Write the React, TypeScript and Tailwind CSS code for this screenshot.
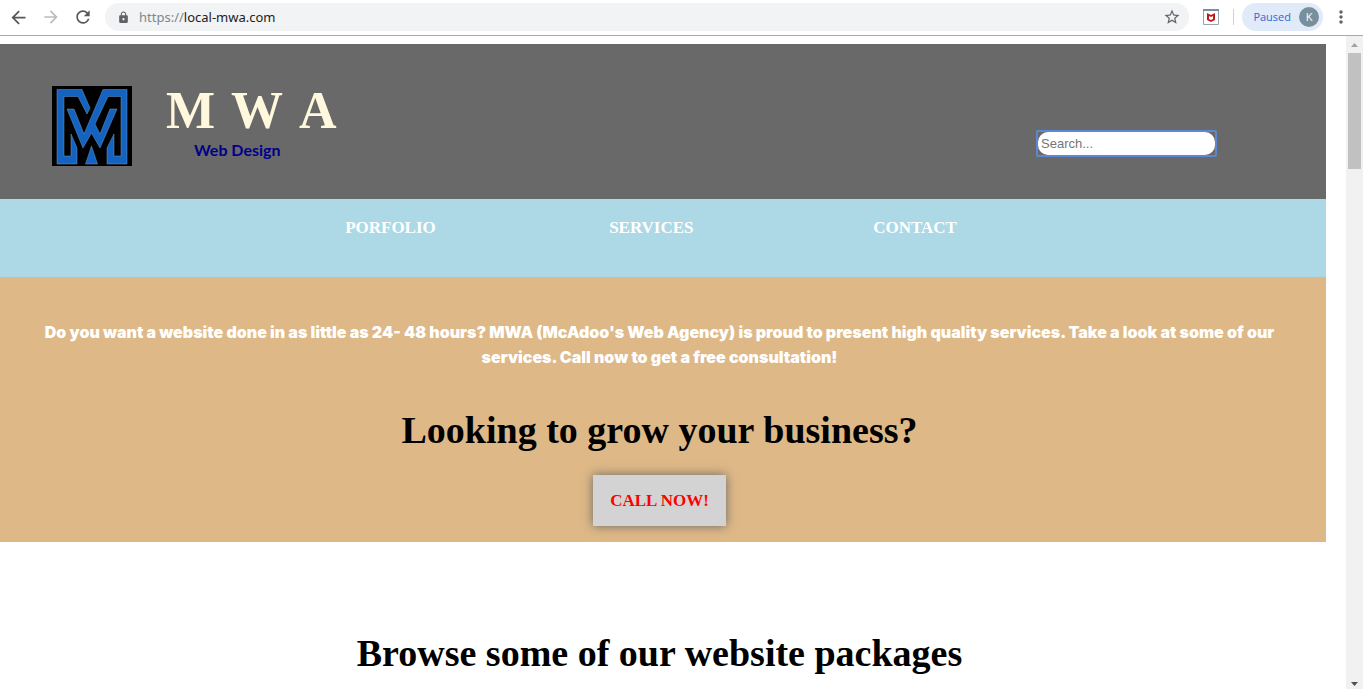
import React from "react";
import { MdArrowBack, MdArrowForward, MdRefresh, MdLock, MdStarBorder, MdMoreVert } from "react-icons/md";

function BrowserBar() {
  return (
    <div className="flex h-9 items-center border-b border-[#a9a9a9] bg-white pb-px text-[#5f6368]">
      <button aria-label="Back" className="ml-2 text-[#55585d]"><MdArrowBack size={21} /></button>
      <button aria-label="Forward" className="ml-3 text-[#babcbe]"><MdArrowForward size={20} /></button>
      <button aria-label="Reload" className="ml-3 text-[#55585d]"><MdRefresh size={20} /></button>
      <div className="ml-3 flex h-7 flex-1 items-center rounded-full bg-[#f1f3f4] pr-2 pl-3">
        <MdLock size={13} />
        <span className="ml-[9px] flex-1 font-['Noto_Sans',sans-serif] text-[13px] leading-5 text-[#202124]">
          <span className="text-[#80868b]">https://</span>local-mwa.com
        </span>
        <button aria-label="Bookmark this page"><MdStarBorder size={18} /></button>
      </div>
      <button aria-label="McAfee WebAdvisor" className="ml-[14px]">
        <svg width="16" height="16" viewBox="0 0 16 16">
          <path d="M.5.5h15v15H.5z" fill="#fff" stroke="#9aa5ab" />
          <path d="M0 0h16v2H0z" fill="#78909c" />
          <path d="M4 4l4 2 4-2v7l-4 2-4-2z" fill="#c01818" />
          <path d="M6 7l2 1 2-1v3l-2 1-2-1z" fill="#fff" />
        </svg>
      </button>
      <span className="ml-[14px] h-4 w-px bg-[#cfd1d3]" />
      <button className="ml-2 flex h-7 items-center gap-2 rounded-full bg-[#e0eaf9] pr-1 pl-[11px] font-['Open_Sans',sans-serif] text-[11px] text-[#3367d6]">
        Paused
        <span className="flex size-5 items-center justify-center rounded-full bg-[#78909c] text-[11px] text-white">K</span>
      </button>
      <button aria-label="Menu" className="mr-3 ml-2"><MdMoreVert size={20} /></button>
    </div>
  );
}

function Logo() {
  return (
    <svg width="80" height="80" viewBox="0 0 80 80" role="img" aria-label="MWA logo">
      <path d="M0 0h80v80H0z" fill="#000" />
      <g fill="#1463c1" stroke="#6f9ac9" strokeWidth=".5">
        <path d="M5 3.500h25l8 18.500-3 6-9-17.500H12V70h7V48l6 14v16H5z" />
        <path d="M75 3.500H51L32 48 22 23h-7l16 39 8.500-15L48 62l17-39h-7L48 48l-5-10 13-27.500h13V70h-7V48l-7 14v16h20z" />
        <path d="M39.500 60l6 18h-12z" />
      </g>
    </svg>
  );
}

function Scrollbar() {
  return (
    <div aria-hidden="true" className="flex w-[17px] flex-col items-center bg-[#f1f1f1]">
      <svg width="17" height="17" viewBox="0 0 17 17"><path d="M5 11h7L8.500 7z" fill="#a3a3a3" /></svg>
      <div className="h-29 w-[13px] bg-[#c1c1c1]" />
      <svg className="mt-auto" width="17" height="17" viewBox="0 0 17 17"><path d="M5 10h7l-3.500 4z" fill="#505050" /></svg>
    </div>
  );
}

export default function App() {
  return (
    <div className="flex h-screen flex-col overflow-hidden bg-white font-['Liberation_Serif',serif]">
      <BrowserBar />
      <div className="flex min-h-0 flex-1">
        <main className="min-w-0 flex-1 overflow-hidden pt-2 pr-5">
          <header className="flex items-start bg-[#696969] px-13 pt-10 pb-[33px]">
            <div className="mt-0.5"><Logo /></div>
            <div className="ml-[34px]">
              <h1 className="flex gap-4 text-[52px] leading-[54px] font-bold text-[#fff8dc]">
                <span>M</span> <span>W</span> <span>A</span>
              </h1>
              <p className="mt-0.5 ml-7 font-['Lato',sans-serif] text-[16px] leading-5 font-bold text-[#00008b]">Web Design</p>
            </div>
            <div className="mt-[46px] mr-[57px] ml-auto h-[27px] w-[181px] rounded-xs border-2 border-[#5b87d6]">
              <input
                type="text"
                aria-label="Search"
                placeholder="Search..."
                className="block h-full w-full rounded-[10px] bg-white px-[3px] font-['Liberation_Sans',sans-serif] text-[13px] outline-none placeholder:text-[#757575]"
              />
            </div>
          </header>
          <nav className="flex h-[78px] justify-center bg-[#add8e6] pt-[19px] pr-6 text-[17px] leading-5 font-bold text-white">
            <a href="#portfolio" className="w-66">PORFOLIO</a>
            <a href="#services" className="w-66">SERVICES</a>
            <a href="#contact">CONTACT</a>
          </nav>
          <section className="flex flex-col items-center bg-[#deb887] pt-[43px] pr-[27px] pb-4 pl-5 text-center">
            <p className="font-['Inter',sans-serif] text-[16px] leading-[25px] font-black text-white">
              Do you want a website done in as little as 24- 48 hours? MWA (McAdoo's Web Agency) is proud to present high quality services. Take a look at some of our services. Call now to get a free consultation!
            </p>
            <h2 className="mt-10 text-[38px] leading-10 font-bold text-black">Looking to grow your business?</h2>
            <button className="mt-[25px] h-[51px] bg-[#d3d3d3] px-[17px] text-[17px] font-bold text-[#ff0000] shadow-[0_0_10px_#666]">
              CALL NOW!
            </button>
          </section>
          <h2 className="mt-[91px] pr-[7px] text-center text-[38px] leading-10 font-bold text-black">Browse some of our website packages</h2>
        </main>
        <Scrollbar />
      </div>
    </div>
  );
}
